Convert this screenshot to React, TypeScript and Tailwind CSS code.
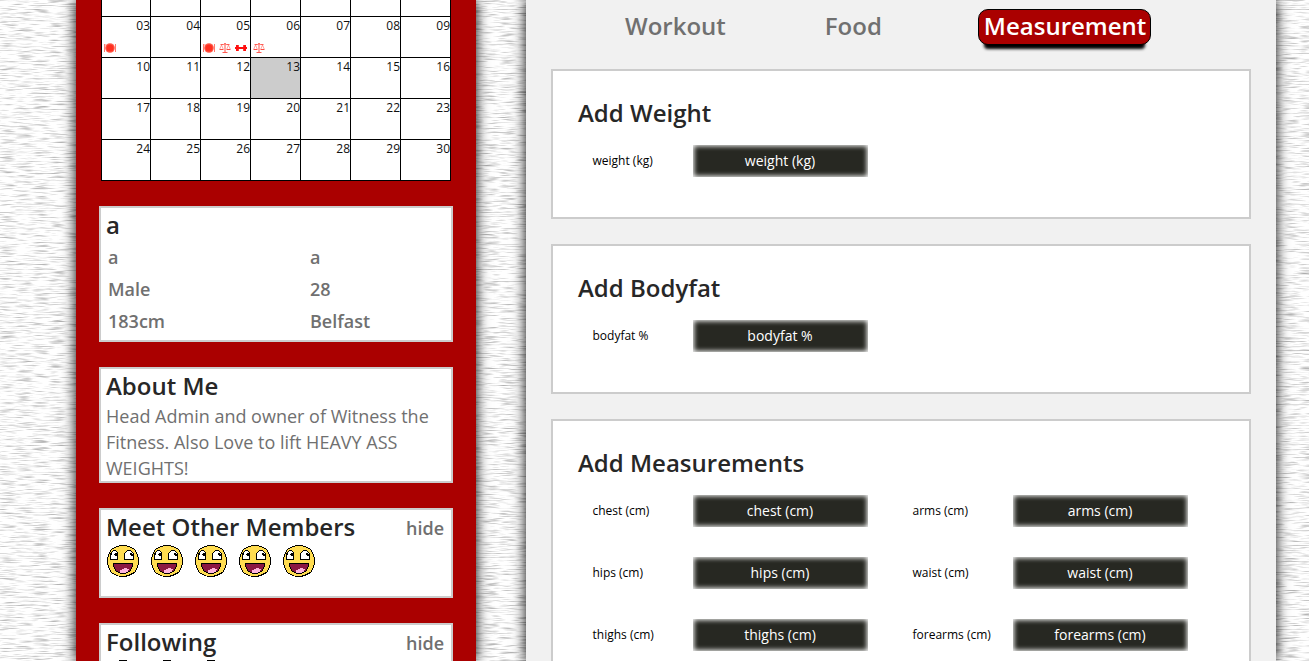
import type { ReactNode } from 'react';

const weeks = [3, 10, 17, 24];

function Plate() {
  return (
    <svg className="block h-3 w-3" viewBox="0 0 12 12">
      <circle cx="6" cy="6" r="4.8" fill="#ff5a4a" />
      <circle cx="6" cy="6" r="3.6" fill="#ff3020" />
      <path d="M.5 2v8M11.500 2v8" stroke="#ff7a70" strokeWidth="1" />
      <path d="M1.500 2v3" stroke="#ffb0a8" strokeWidth=".8" />
    </svg>
  );
}

function Scales() {
  return (
    <svg className="block h-3 w-3" viewBox="0 0 12 12" fill="none" stroke="#ff4a40">
      <path d="M6 1v9.500" stroke="#ff5048" />
      <path d="M1.500 2.500h3.200l1.300-1 1.300 1h3.200M3.500 10.500h5" strokeWidth=".9" />
      <path d="M2.500 3L.8 7M2.500 3l1.700 4M9.500 3L7.800 7M9.500 3l1.700 4" strokeWidth=".5" />
      <path d="M.5 7.500h4M7.500 7.500h4" strokeWidth="1" />
    </svg>
  );
}

function Dumbbell() {
  return (
    <svg className="block h-3 w-3" viewBox="0 0 12 12" fill="#ff0f0f">
      <path d="M0 5h1V3h2.800v2h4.400V3H11v2h1v2h-1v2H8.200V7H3.800v2H1V7H0z" />
    </svg>
  );
}

function Face() {
  return (
    <svg className="block h-8 w-8 shrink-0" viewBox="0 0 32 32" shapeRendering="crispEdges">
      <path
        fill="#000"
        d="M12 0h8v1h3v1h2v1h2v1h1v1h1v2h1v2h1v3h1v8h-1v3h-1v2h-1v2h-1v1h-1v1h-2v1h-2v1h-3v1h-8v-1H9v-1H7v-1H5v-1H4v-1H3v-2H2v-2H1v-3H0v-8h1V9h1V7h1V5h1V4h1V3h2V2h2V1h3z"
      />
      <path
        fill="#ffdc50"
        d="M12 1h8v1h3v1h2v1h2v1h1v2h1v2h1v3h1v8h-1v3h-1v2h-1v2h-2v1h-2v1h-2v1h-3v1h-8v-1H9v-1H7v-1H5v-1H4v-2H3v-2H2v-3H1v-8h1V9h1V7h1V5h1V4h2V3h2V2h3z"
      />
      <path fill="#000" d="M6 5h3v1h1v1h1v8H3V8h1V7h1V6h1zM20 5h4v1h1v1h1v1h1v7H17V8h1V7h1V6h1z" />
      <path fill="#fff" d="M6 6h3v1h1v7H4V9h1V7h1zM20 6h4v1h1v1h1v6h-8V8h1V7h1z" />
      <path fill="#000" d="M8 8h2v3H8v-1H7V9h1zM23 8h2v1h1v2h-2v-1h-1zM4 9h1v1H4z" />
      <path fill="#000" d="M6 18h20v4h-1v2h-1v2h-1v1h-2v1h-2v1h-6v-1h-2v-1H9v-1H8v-2H7v-2H6z" />
      <path fill="#8b1742" d="M7 19h18v3h-1v2h-1v2h-2v1h-2v1h-6v-1h-2v-1H9v-2H8v-2H7z" />
      <path fill="#ffb4dc" d="M17 23h3v1h2v1h-1v2h-2v1h-6v-3h2v-1h2z" />
    </svg>
  );
}

function Texture() {
  return (
    <svg className="absolute inset-0 h-full w-full" aria-hidden="true">
      <filter id="paper" x="0" y="0" width="100%" height="100%" colorInterpolationFilters="sRGB">
        <feTurbulence type="fractalNoise" baseFrequency="0.06 0.75" numOctaves="2" seed="4" />
        <feColorMatrix values="0 0 0 0 0.55  0 0 0 0 0.55  0 0 0 0 0.55  1.7 0 0 0 -0.81" />
      </filter>
      <rect width="100%" height="100%" filter="url(#paper)" />
    </svg>
  );
}

function Calendar() {
  const marks: Record<number, ReactNode> = {
    3: <Plate />,
    5: (
      <>
        <Plate />
        <Scales />
        <Dumbbell />
      </>
    ),
    6: <Scales />,
  };
  return (
    <div className="ml-[25px] w-[350px] bg-white text-xs text-[#111]">
      <div className="grid h-[17px] grid-cols-7">
        {[0, 1, 2, 3, 4, 5, 6].map((i) => (
          <div key={i} className="border-r border-b border-black first:border-l" />
        ))}
      </div>
      {weeks.map((start) => (
        <div key={start} className="grid h-[41px] grid-cols-7">
          {[0, 1, 2, 3, 4, 5, 6].map((i) => {
            const day = start + i;
            return (
              <div
                key={day}
                className={`flex flex-col justify-between border-r border-b border-black first:border-l ${day === 13 ? 'bg-[#ccc]' : ''}`}
              >
                <div className="text-right leading-[17px]">{String(day).padStart(2, '0')}</div>
                <div className="flex gap-1 pb-[3px] pl-[2px]">{marks[day]}</div>
              </div>
            );
          })}
        </div>
      ))}
    </div>
  );
}

const title = 'text-[24px] leading-[34px] font-semibold text-[#272727]';

function SideCard({ heading, hide, className, children }: { heading: string; hide?: boolean; className: string; children: ReactNode }) {
  return (
    <section className={`mt-[25px] ml-[23px] w-[354px] shrink-0 border-2 border-[#ccc] bg-white px-[5px] ${className}`}>
      <div className="flex h-[34px] justify-between">
        <h2 className={title}>{heading}</h2>
        {hide && <a className="pr-[2px] text-lg leading-[36px] font-semibold text-[#707070]">hide</a>}
      </div>
      {children}
    </section>
  );
}

function Faces({ count }: { count: number }) {
  return (
    <div className="flex gap-3 pt-px pl-px">
      {Array.from({ length: count }, (_, i) => (
        <Face key={i} />
      ))}
    </div>
  );
}

function Field({ name }: { name: string }) {
  return (
    <div className="flex h-8 w-[320px] items-center text-black">
      <label className="w-[101px] pl-[0.5px] text-xs">{name}</label>
      <div className="h-8 w-[175px] bg-[#272822] pr-px text-center text-sm leading-8 text-white shadow-[inset_0_0_5px_1px_#fff]">{name}</div>
    </div>
  );
}

function FormCard({ heading, fields, className }: { heading: string; fields: string[]; className: string }) {
  return (
    <section className={`mx-[25px] mb-[25px] shrink-0 border-2 border-[#ccc] bg-white pt-[25px] pl-[25px] ${className}`}>
      <h2 className={title}>{heading}</h2>
      <div className="mt-[15px] ml-[14px] flex flex-wrap gap-y-[30px]">
        {fields.map((f) => (
          <Field key={f} name={f} />
        ))}
      </div>
    </section>
  );
}

export default function App() {
  return (
    <div className="relative h-[661px] w-[1309px] overflow-hidden bg-white font-['Open_Sans',sans-serif]">
      <Texture />
      <div className="relative flex h-full gap-[50px] pl-[76px]">
        <aside className="flex w-[400px] flex-col bg-[#a00] shadow-[0_0_13px_#000]">
          <Calendar />
          <SideCard heading="a" className="h-[136px]">
            <div className="-mt-px grid grid-cols-[202px_1fr] pl-[2px] text-lg leading-8 font-semibold text-[#707070]">
              {['a', 'a', 'Male', '28', '183cm', 'Belfast'].map((v, i) => (
                <div key={i}>{v}</div>
              ))}
            </div>
          </SideCard>
          <SideCard heading="About Me" className="h-[116px]">
            <p className="text-lg leading-[26px] text-[#707070]">
              Head Admin and owner of Witness the Fitness. Also Love to lift HEAVY ASS WEIGHTS!
            </p>
          </SideCard>
          <SideCard heading="Meet Other Members" hide className="h-[90px]">
            <Faces count={5} />
          </SideCard>
          <SideCard heading="Following" hide className="h-[90px]">
            <Faces count={3} />
          </SideCard>
        </aside>
        <main className="flex w-[750px] flex-col bg-[#f1f1f1] shadow-[0_0_13px_#000]">
          <nav className="flex h-[69px] shrink-0 items-start gap-[87px] pt-[9px] pl-[93px] text-[24px] leading-[34px] font-semibold text-[#707070]">
            <a className="h-9 border border-transparent px-[5px] leading-[32px]">Workout</a>
            <a className="h-9 border border-transparent px-[5px] leading-[32px]">Food</a>
            <a className="ml-[3px] h-9 rounded-[10px] border border-black bg-[#a00] pr-[4px] pl-[5px] leading-[32px] text-white shadow-[0_10px_3px_-6px_#000]">
              Measurement
            </a>
          </nav>
          <FormCard heading="Add Weight" fields={['weight (kg)']} className="h-[150px]" />
          <FormCard heading="Add Bodyfat" fields={['bodyfat %']} className="h-[150px]" />
          <FormCard
            heading="Add Measurements"
            fields={['chest (cm)', 'arms (cm)', 'hips (cm)', 'waist (cm)', 'thighs (cm)', 'forearms (cm)']}
            className="h-[340px]"
          />
        </main>
      </div>
    </div>
  );
}
